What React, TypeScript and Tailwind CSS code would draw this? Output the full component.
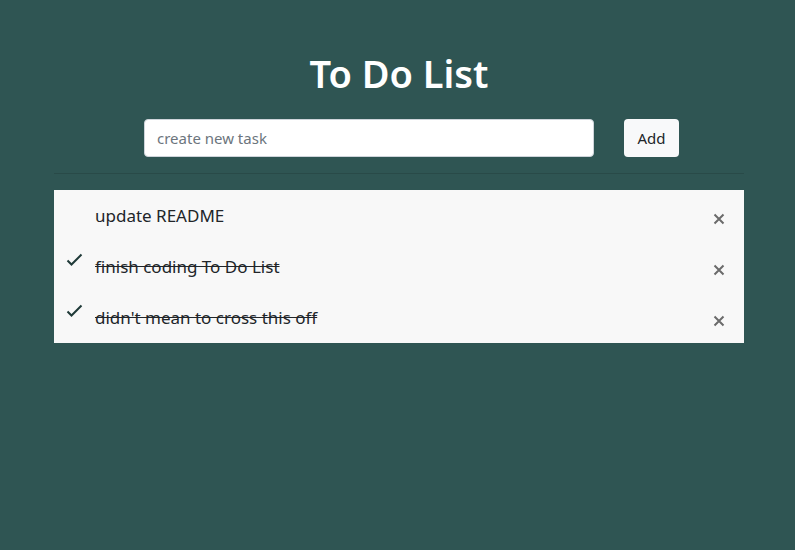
import { useState } from "react";

type Task = { id: number; text: string; done: boolean };

const initialTasks: Task[] = [
  { id: 1, text: "update README", done: false },
  { id: 2, text: "finish coding To Do List", done: true },
  { id: 3, text: "didn't mean to cross this off", done: true },
];

export default function App() {
  const [tasks, setTasks] = useState<Task[]>(initialTasks);
  const [draft, setDraft] = useState("");

  const addTask = () => {
    if (!draft.trim()) return;
    setTasks([...tasks, { id: Date.now(), text: draft.trim(), done: false }]);
    setDraft("");
  };

  return (
    <div className="min-h-[550px] w-full bg-[#2f5553] pl-[3px] font-['Noto_Sans',sans-serif]">
      <div className="mx-auto w-[690px] pt-[43px]">
        <h1 className="text-center text-[38px] font-semibold leading-[60px] text-white">
          To Do List
        </h1>
        <div className="mt-[16px] flex items-center justify-center gap-[30px] pl-[25px]">
          <input
            value={draft}
            onChange={(e) => setDraft(e.target.value)}
            placeholder="create new task"
            className="h-[38px] w-[450px] rounded-[4px] border border-[#ced4da] bg-white px-[12px] text-[15px] text-[#212529] placeholder-[#6c757d] focus:outline-none"
          />
          <button
            onClick={addTask}
            className="h-[38px] w-[55px] rounded-[4px] bg-[#f8f9fa] text-[15px] text-[#212529]"
          >
            Add
          </button>
        </div>
        <div className="mt-[16px] h-px bg-[#294a48]" />
        <ul className="mt-[16px] bg-[#f8f8f8]">
          {tasks.map((t) => (
            <li key={t.id} className="flex h-[51px] items-start">
              <button
                onClick={() =>
                  setTasks(tasks.map((x) => (x.id === t.id ? { ...x, done: !x.done } : x)))
                }
                className="mt-[11px] ml-[11px] flex h-[16px] w-[18px] items-center justify-center"
              >
                {t.done && (
                  <svg width="17" height="14" viewBox="0 0 17 14" fill="none">
                    <path d="M1.5 7.5L5.5 11.5L15.5 1.5" stroke="#1f3a38" strokeWidth="2" />
                  </svg>
                )}
              </button>
              <span
                className={
                  "ml-[12px] mt-[13px] flex-1 text-[17px] leading-[25px] text-[#212529] " +
                  (t.done ? "line-through" : "")
                }
              >
                {t.text}
              </span>
              <button
                onClick={() => setTasks(tasks.filter((x) => x.id !== t.id))}
                className="mt-[23px] mr-[19px] flex h-[12px] w-[12px] items-center justify-center"
              >
                <svg width="12" height="12" viewBox="0 0 12 12">
                  <path d="M1.5 1.5L10.5 10.5M10.5 1.5L1.5 10.5" stroke="#6b6b6b" strokeWidth="2" />
                </svg>
              </button>
            </li>
          ))}
        </ul>
      </div>
    </div>
  );
}
